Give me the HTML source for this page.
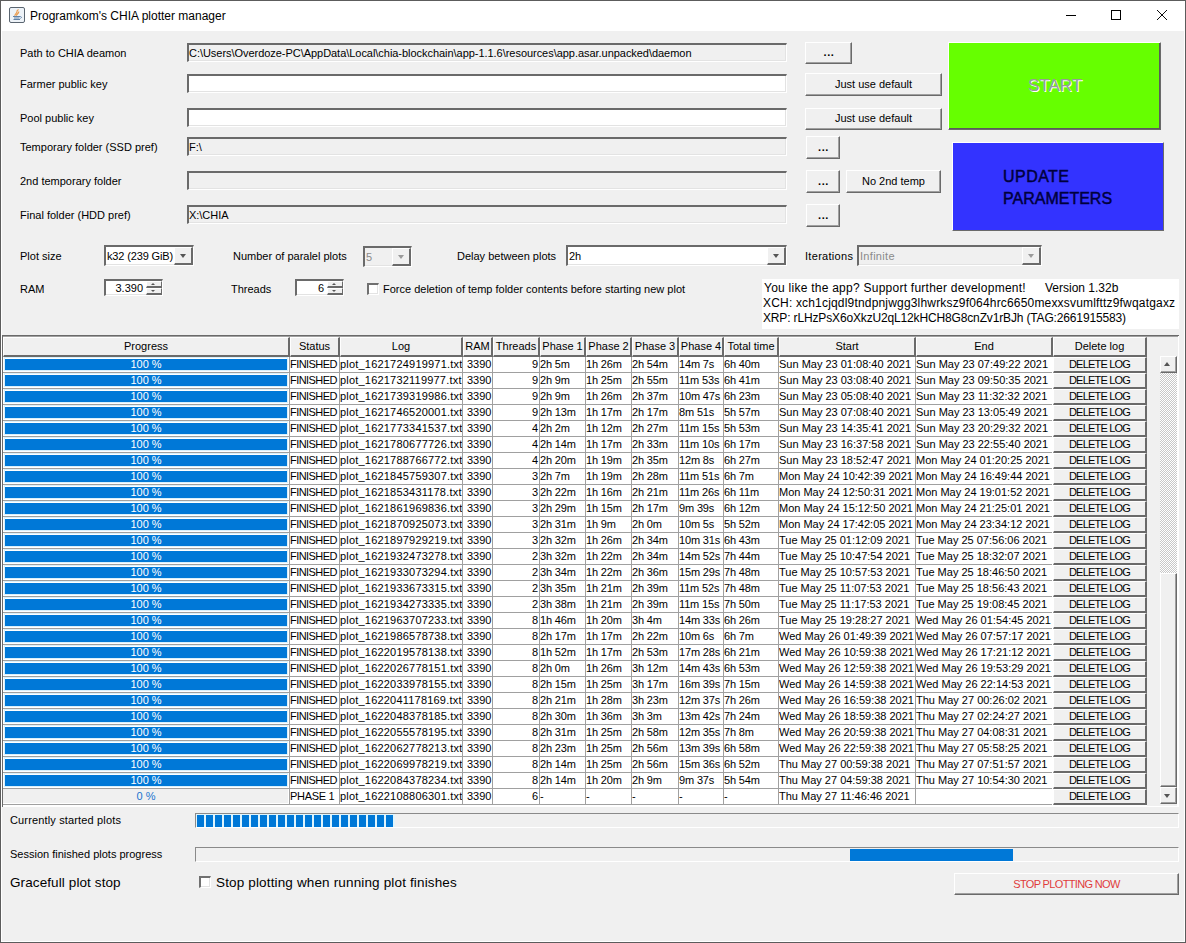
<!DOCTYPE html><html><head><meta charset="utf-8"><style>
*{margin:0;padding:0;box-sizing:border-box}
html,body{width:1186px;height:943px;overflow:hidden;background:#f0f0f0}
body{position:relative;font-family:"Liberation Sans",sans-serif;font-size:11px;color:#000}
.a{position:absolute}
.t{position:absolute;white-space:nowrap;line-height:12px}
.tf{position:absolute;border-top:2px solid #6a6a6a;border-left:2px solid #6a6a6a;border-right:1px solid #fff;border-bottom:1px solid #fff;box-shadow:inset -1px -1px 0 #e3e3e3;background:#f0f0f0}
.tf.w{background:#fff}
.btn{position:absolute;background:#f0f0f0;border-top:1px solid #fff;border-left:1px solid #fff;border-right:1px solid #6a6a6a;border-bottom:1px solid #6a6a6a;box-shadow:inset -1px -1px 0 #a0a0a0;text-align:center;white-space:nowrap}
.hd{position:absolute;top:337px;height:20px;background:#f0f0f0;border-top:1px solid #fff;border-left:1px solid #fff;border-right:2px solid #6a6a6a;border-bottom:2px solid #6a6a6a;text-align:center;line-height:17px;white-space:nowrap;overflow:hidden}
.c{position:absolute;height:16px;line-height:15px;white-space:nowrap;overflow:hidden;padding-left:0}
.ab{position:absolute;background:#f0f0f0;border-top:1px solid #fff;border-left:1px solid #fff;border-right:2px solid #6a6a6a;border-bottom:2px solid #6a6a6a}
.tri{position:absolute;width:0;height:0;border-left:3.5px solid transparent;border-right:3.5px solid transparent}
.cb{position:absolute;width:12px;height:12px;background:#fff;border-top:2px solid #707070;border-left:2px solid #707070;border-right:1px solid #fff;border-bottom:1px solid #fff;box-shadow:inset -1px -1px 0 #e3e3e3}
</style></head><body>
<div class="a" style="left:0;top:0;width:1186px;height:31px;background:#fff"></div>
<div class="a" style="left:1184px;top:0;width:2px;height:943px;background:#fff"></div>
<div class="a" style="left:1px;top:0;width:1px;height:943px;background:#fff"></div>
<div class="a" style="left:0;top:941px;width:1186px;height:1px;background:#fff"></div>
<div class="a" style="left:0;top:0;width:1186px;height:1px;background:#5c5c5c"></div>
<div class="a" style="left:0;top:0;width:1px;height:943px;background:#5c5c5c"></div>
<div class="a" style="left:1185px;top:0;width:1px;height:943px;background:#5c5c5c"></div>
<div class="a" style="left:0;top:942px;width:1186px;height:1px;background:#5c5c5c"></div>
<svg class="a" style="left:9px;top:7px" width="16" height="16" viewBox="0 0 16 16">
<rect x="0.5" y="0.5" width="15" height="15" rx="1.5" fill="#eef3f8" stroke="#5a6570"/>
<path d="M6 9 C5 7.5 8.5 6 8 4.5 C7.8 3.5 9 3 9.5 2.5 M7.5 8.8 C7 7.5 10 6.5 9.8 4.5" stroke="#eb9a4a" stroke-width="1.2" fill="none"/>
<path d="M4 9.5 H11.5 M5 11 H10.5 M4.5 12.5 H11" stroke="#6283a8" stroke-width="1" fill="none"/>
<path d="M11.5 9.5 Q13.5 10 11.5 11.5" stroke="#6283a8" stroke-width="1" fill="none"/>
</svg>
<div class="t" style="left:30px;top:9px;font-size:12px;line-height:14px;color:#000">Programkom's CHIA plotter manager</div>
<div class="a" style="left:1066px;top:15px;width:10px;height:1px;background:#000"></div>
<div class="a" style="left:1111px;top:10px;width:10px;height:10px;border:1px solid #000"></div>
<svg class="a" style="left:1156px;top:9px" width="12" height="12" viewBox="0 0 12 12"><path d="M1 1 L11 11 M11 1 L1 11" stroke="#000" stroke-width="0.95"/></svg>
<div class="t" style="left:20px;top:47px">Path to CHIA deamon</div>
<div class="t" style="left:20px;top:78px">Farmer public key</div>
<div class="t" style="left:20px;top:112px">Pool public key</div>
<div class="t" style="left:20px;top:141px">Temporary folder (SSD pref)</div>
<div class="t" style="left:20px;top:175px">2nd temporary folder</div>
<div class="t" style="left:20px;top:209px">Final folder (HDD pref)</div>
<div class="tf" style="left:187px;top:43px;width:600px;height:19px"><div class="t" style="left:0px;top:2px;letter-spacing:-0.04px">C:\Users\Overdoze-PC\AppData\Local\chia-blockchain\app-1.1.6\resources\app.asar.unpacked\daemon</div></div>
<div class="tf w" style="left:187px;top:74px;width:600px;height:19px"><div class="t" style="left:0px;top:2px;letter-spacing:-0.04px"></div></div>
<div class="tf w" style="left:187px;top:108px;width:600px;height:19px"><div class="t" style="left:0px;top:2px;letter-spacing:-0.04px"></div></div>
<div class="tf" style="left:187px;top:137px;width:600px;height:19px"><div class="t" style="left:0px;top:2px;letter-spacing:-0.04px">F:\</div></div>
<div class="tf" style="left:187px;top:171px;width:600px;height:19px"><div class="t" style="left:0px;top:2px;letter-spacing:-0.04px"></div></div>
<div class="tf" style="left:187px;top:205px;width:600px;height:19px"><div class="t" style="left:0px;top:2px;letter-spacing:-0.04px">X:\CHIA</div></div>
<div class="btn" style="left:805px;top:42px;width:47px;height:22px;line-height:19px;"><span style="font-weight:bold;letter-spacing:0.6px;padding-left:1px">...</span></div>
<div class="btn" style="left:805px;top:73px;width:137px;height:23px;line-height:20px;">Just use default</div>
<div class="btn" style="left:805px;top:108px;width:137px;height:22px;line-height:19px;">Just use default</div>
<div class="btn" style="left:806px;top:136px;width:34px;height:23px;line-height:20px;"><span style="font-weight:bold;letter-spacing:0.6px;padding-left:1px">...</span></div>
<div class="btn" style="left:806px;top:170px;width:34px;height:23px;line-height:20px;"><span style="font-weight:bold;letter-spacing:0.6px;padding-left:1px">...</span></div>
<div class="btn" style="left:846px;top:170px;width:95px;height:23px;line-height:20px;">No 2nd temp</div>
<div class="btn" style="left:806px;top:204px;width:34px;height:23px;line-height:20px;"><span style="font-weight:bold;letter-spacing:0.6px;padding-left:1px">...</span></div>
<div class="btn" style="left:948px;top:42px;width:213px;height:88px;background:#66ff00;box-shadow:inset -1px -1px 0 #5a5a5a"></div>
<div class="t" style="left:1029px;top:77px;font-size:17px;line-height:19px;color:#fff">START</div>
<div class="t" style="left:1028px;top:76px;font-size:17px;line-height:19px;color:#9a9a9a">START</div>
<div class="btn" style="left:952px;top:142px;width:212px;height:89px;background:#3333ff;box-shadow:none"></div>
<div class="t" style="left:1003px;top:166px;font-size:16px;line-height:22px;color:#00003c;-webkit-text-stroke:0.45px #00003c"><span style="letter-spacing:0.45px">UPDATE</span><br>PARAMETERS</div>
<div class="t" style="left:20px;top:250px">Plot size</div>
<div class="tf" style="left:104px;top:245px;width:90px;height:21px;background:#fff"></div>
<div class="t" style="left:107px;top:250px;color:#000;letter-spacing:-0.15px">k32 (239 GiB)</div>
<div class="ab" style="left:174px;top:247px;width:19px;height:18px"></div>
<div class="tri" style="left:180px;top:254px;border-top:4px solid #555"></div>
<div class="t" style="left:233px;top:250px">Number of paralel plots</div>
<div class="tf" style="left:363px;top:246px;width:49px;height:21px;background:#f0f0f0"></div>
<div class="t" style="left:366px;top:251px;color:#8a8a8a;letter-spacing:0px">5</div>
<div class="ab" style="left:392px;top:248px;width:19px;height:18px"></div>
<div class="tri" style="left:398px;top:255px;border-top:4px solid #9a9a9a"></div>
<div class="t" style="left:457px;top:250px">Delay between plots</div>
<div class="tf" style="left:566px;top:245px;width:221px;height:21px;background:#fff"></div>
<div class="t" style="left:569px;top:250px;color:#000;letter-spacing:0px">2h</div>
<div class="ab" style="left:767px;top:247px;width:19px;height:18px"></div>
<div class="tri" style="left:773px;top:254px;border-top:4px solid #555"></div>
<div class="t" style="left:805px;top:250px;letter-spacing:0.3px">Iterations</div>
<div class="tf" style="left:857px;top:245px;width:185px;height:21px;background:#f0f0f0"></div>
<div class="t" style="left:860px;top:250px;color:#8a8a8a;letter-spacing:0.3px">Infinite</div>
<div class="ab" style="left:1022px;top:247px;width:19px;height:18px"></div>
<div class="tri" style="left:1028px;top:254px;border-top:4px solid #9a9a9a"></div>
<div class="t" style="left:20px;top:283px">RAM</div>
<div class="tf w" style="left:104px;top:279px;width:59px;height:17px"></div>
<div class="t" style="left:104px;width:39px;text-align:right;top:282px">3.390</div>
<div class="ab" style="left:146px;top:281px;width:16px;height:7px;border-right-width:1px;border-bottom-width:2px"></div>
<div class="ab" style="left:146px;top:288px;width:16px;height:7px;border-right-width:1px;border-bottom-width:2px"></div>
<div class="tri" style="left:151px;top:283px;border-left-width:2.5px;border-right-width:2.5px;border-bottom:2px solid #555"></div>
<div class="tri" style="left:151px;top:290px;border-left-width:2.5px;border-right-width:2.5px;border-top:2px solid #555"></div>
<div class="t" style="left:231px;top:283px">Threads</div>
<div class="tf w" style="left:295px;top:279px;width:49px;height:17px"></div>
<div class="t" style="left:295px;width:29px;text-align:right;top:282px">6</div>
<div class="ab" style="left:327px;top:281px;width:16px;height:7px;border-right-width:1px;border-bottom-width:2px"></div>
<div class="ab" style="left:327px;top:288px;width:16px;height:7px;border-right-width:1px;border-bottom-width:2px"></div>
<div class="tri" style="left:332px;top:283px;border-left-width:2.5px;border-right-width:2.5px;border-bottom:2px solid #555"></div>
<div class="tri" style="left:332px;top:290px;border-left-width:2.5px;border-right-width:2.5px;border-top:2px solid #555"></div>
<div class="cb" style="left:367px;top:283px"></div>
<div class="t" style="left:383px;top:283px">Force deletion of temp folder contents before starting new plot</div>
<div class="a" style="left:762px;top:279px;width:417px;height:50px;background:#fff"></div>
<div class="t" style="left:764px;top:281px;font-size:12px;line-height:14px;letter-spacing:0.25px">You like the app? Support further development!</div>
<div class="t" style="left:1045px;top:281px;font-size:12px;line-height:14px">Version 1.32b</div>
<div class="t" style="left:763px;top:296px;font-size:12px;line-height:14px;letter-spacing:0.18px">XCH: xch1cjqdl9tndpnjwgg3lhwrksz9f064hrc6650mexxsvumlfttz9fwqatgaxz</div>
<div class="t" style="left:763px;top:311px;font-size:12px;line-height:14px;letter-spacing:-0.15px">XRP: rLHzPsX6oXkzU2qL12kHCH8G8cnZv1rBJh (TAG:2661915583)</div>
<div class="a" style="left:2px;top:335px;width:1177px;height:472px;background:#fff;border-top:1px solid #6a6a6a;border-left:1px solid #6a6a6a"></div>
<div class="a" style="left:3px;top:336px;width:1175px;height:1px;background:#a0a0a0"></div>
<div class="a" style="left:3px;top:337px;width:1175px;height:20px;background:#f0f0f0"></div>
<div class="a" style="left:1147px;top:357px;width:13px;height:449px;background:#f0f0f0"></div>
<div class="a" style="left:1160px;top:337px;width:18px;height:20px;background:#f0f0f0"></div>
<div class="hd" style="left:3px;width:287px">Progress</div>
<div class="hd" style="left:290px;width:50px">Status</div>
<div class="hd" style="left:340px;width:123px">Log</div>
<div class="hd" style="left:463px;width:30px">RAM</div>
<div class="hd" style="left:493px;width:47px">Threads</div>
<div class="hd" style="left:540px;width:46px">Phase 1</div>
<div class="hd" style="left:586px;width:46px">Phase 2</div>
<div class="hd" style="left:632px;width:47px">Phase 3</div>
<div class="hd" style="left:679px;width:45px">Phase 4</div>
<div class="hd" style="left:724px;width:55px">Total time</div>
<div class="hd" style="left:779px;width:137px">Start</div>
<div class="hd" style="left:916px;width:137px">End</div>
<div class="hd" style="left:1053px;width:94px">Delete log</div>
<div class="a" style="left:3px;top:372px;width:1049px;height:1px;background:#a0a0a0"></div>
<div class="a" style="left:3px;top:388px;width:1049px;height:1px;background:#a0a0a0"></div>
<div class="a" style="left:3px;top:404px;width:1049px;height:1px;background:#a0a0a0"></div>
<div class="a" style="left:3px;top:420px;width:1049px;height:1px;background:#a0a0a0"></div>
<div class="a" style="left:3px;top:436px;width:1049px;height:1px;background:#a0a0a0"></div>
<div class="a" style="left:3px;top:452px;width:1049px;height:1px;background:#a0a0a0"></div>
<div class="a" style="left:3px;top:468px;width:1049px;height:1px;background:#a0a0a0"></div>
<div class="a" style="left:3px;top:484px;width:1049px;height:1px;background:#a0a0a0"></div>
<div class="a" style="left:3px;top:500px;width:1049px;height:1px;background:#a0a0a0"></div>
<div class="a" style="left:3px;top:516px;width:1049px;height:1px;background:#a0a0a0"></div>
<div class="a" style="left:3px;top:532px;width:1049px;height:1px;background:#a0a0a0"></div>
<div class="a" style="left:3px;top:548px;width:1049px;height:1px;background:#a0a0a0"></div>
<div class="a" style="left:3px;top:564px;width:1049px;height:1px;background:#a0a0a0"></div>
<div class="a" style="left:3px;top:580px;width:1049px;height:1px;background:#a0a0a0"></div>
<div class="a" style="left:3px;top:596px;width:1049px;height:1px;background:#a0a0a0"></div>
<div class="a" style="left:3px;top:612px;width:1049px;height:1px;background:#a0a0a0"></div>
<div class="a" style="left:3px;top:628px;width:1049px;height:1px;background:#a0a0a0"></div>
<div class="a" style="left:3px;top:644px;width:1049px;height:1px;background:#a0a0a0"></div>
<div class="a" style="left:3px;top:660px;width:1049px;height:1px;background:#a0a0a0"></div>
<div class="a" style="left:3px;top:676px;width:1049px;height:1px;background:#a0a0a0"></div>
<div class="a" style="left:3px;top:692px;width:1049px;height:1px;background:#a0a0a0"></div>
<div class="a" style="left:3px;top:708px;width:1049px;height:1px;background:#a0a0a0"></div>
<div class="a" style="left:3px;top:724px;width:1049px;height:1px;background:#a0a0a0"></div>
<div class="a" style="left:3px;top:740px;width:1049px;height:1px;background:#a0a0a0"></div>
<div class="a" style="left:3px;top:756px;width:1049px;height:1px;background:#a0a0a0"></div>
<div class="a" style="left:3px;top:772px;width:1049px;height:1px;background:#a0a0a0"></div>
<div class="a" style="left:3px;top:788px;width:1049px;height:1px;background:#a0a0a0"></div>
<div class="a" style="left:3px;top:804px;width:1049px;height:1px;background:#a0a0a0"></div>
<div class="a" style="left:289px;top:357px;width:1px;height:448px;background:#a0a0a0"></div>
<div class="a" style="left:339px;top:357px;width:1px;height:448px;background:#a0a0a0"></div>
<div class="a" style="left:462px;top:357px;width:1px;height:448px;background:#a0a0a0"></div>
<div class="a" style="left:492px;top:357px;width:1px;height:448px;background:#a0a0a0"></div>
<div class="a" style="left:539px;top:357px;width:1px;height:448px;background:#a0a0a0"></div>
<div class="a" style="left:585px;top:357px;width:1px;height:448px;background:#a0a0a0"></div>
<div class="a" style="left:631px;top:357px;width:1px;height:448px;background:#a0a0a0"></div>
<div class="a" style="left:678px;top:357px;width:1px;height:448px;background:#a0a0a0"></div>
<div class="a" style="left:723px;top:357px;width:1px;height:448px;background:#a0a0a0"></div>
<div class="a" style="left:778px;top:357px;width:1px;height:448px;background:#a0a0a0"></div>
<div class="a" style="left:915px;top:357px;width:1px;height:448px;background:#a0a0a0"></div>
<div class="a" style="left:4px;top:357px;width:284px;height:14px;background:#fff;border:1px solid #d8f0fb"></div>
<div class="a" style="left:5px;top:359px;width:282px;height:11px;background:#0078d7"></div>
<div class="t" style="left:5px;width:282px;text-align:center;top:358px;color:#fff">100 %</div>
<div class="c" style="left:290px;top:356px;width:49px;letter-spacing:-0.55px;line-height:16px">FINISHED</div>
<div class="c" style="left:340px;top:356px;width:122px;letter-spacing:0.2px;line-height:16px">plot_1621724919971.txt</div>
<div class="c" style="left:463px;top:356px;width:29px;padding-left:4px;line-height:16px">3390</div>
<div class="c" style="left:493px;top:356px;width:46px;text-align:right;padding-right:1px;padding-left:0;line-height:16px">9</div>
<div class="c" style="left:540px;top:356px;width:45px;letter-spacing:-0.15px;line-height:16px">2h 5m</div>
<div class="c" style="left:586px;top:356px;width:45px;letter-spacing:-0.15px;line-height:16px">1h 26m</div>
<div class="c" style="left:632px;top:356px;width:46px;letter-spacing:-0.15px;line-height:16px">2h 54m</div>
<div class="c" style="left:679px;top:356px;width:44px;letter-spacing:-0.15px;line-height:16px">14m 7s</div>
<div class="c" style="left:724px;top:356px;width:54px;letter-spacing:-0.15px;line-height:16px">6h 40m</div>
<div class="c" style="left:779px;top:356px;width:136px;line-height:16px">Sun May 23 01:08:40 2021</div>
<div class="c" style="left:916px;top:356px;width:136px;line-height:16px">Sun May 23 07:49:22 2021</div>
<div class="btn" style="left:1053px;top:357px;width:94px;height:16px;line-height:13px;border-bottom:2px solid #6a6a6a;border-right:2px solid #6a6a6a;box-shadow:none;letter-spacing:-0.8px">DELETE LOG</div>
<div class="a" style="left:4px;top:373px;width:284px;height:14px;background:#fff;border:1px solid #d8f0fb"></div>
<div class="a" style="left:5px;top:375px;width:282px;height:11px;background:#0078d7"></div>
<div class="t" style="left:5px;width:282px;text-align:center;top:374px;color:#fff">100 %</div>
<div class="c" style="left:290px;top:372px;width:49px;letter-spacing:-0.55px;line-height:16px">FINISHED</div>
<div class="c" style="left:340px;top:372px;width:122px;letter-spacing:0.2px;line-height:16px">plot_1621732119977.txt</div>
<div class="c" style="left:463px;top:372px;width:29px;padding-left:4px;line-height:16px">3390</div>
<div class="c" style="left:493px;top:372px;width:46px;text-align:right;padding-right:1px;padding-left:0;line-height:16px">9</div>
<div class="c" style="left:540px;top:372px;width:45px;letter-spacing:-0.15px;line-height:16px">2h 9m</div>
<div class="c" style="left:586px;top:372px;width:45px;letter-spacing:-0.15px;line-height:16px">1h 25m</div>
<div class="c" style="left:632px;top:372px;width:46px;letter-spacing:-0.15px;line-height:16px">2h 55m</div>
<div class="c" style="left:679px;top:372px;width:44px;letter-spacing:-0.15px;line-height:16px">11m 53s</div>
<div class="c" style="left:724px;top:372px;width:54px;letter-spacing:-0.15px;line-height:16px">6h 41m</div>
<div class="c" style="left:779px;top:372px;width:136px;line-height:16px">Sun May 23 03:08:40 2021</div>
<div class="c" style="left:916px;top:372px;width:136px;line-height:16px">Sun May 23 09:50:35 2021</div>
<div class="btn" style="left:1053px;top:373px;width:94px;height:16px;line-height:13px;border-bottom:2px solid #6a6a6a;border-right:2px solid #6a6a6a;box-shadow:none;letter-spacing:-0.8px">DELETE LOG</div>
<div class="a" style="left:4px;top:389px;width:284px;height:14px;background:#fff;border:1px solid #d8f0fb"></div>
<div class="a" style="left:5px;top:391px;width:282px;height:11px;background:#0078d7"></div>
<div class="t" style="left:5px;width:282px;text-align:center;top:390px;color:#fff">100 %</div>
<div class="c" style="left:290px;top:388px;width:49px;letter-spacing:-0.55px;line-height:16px">FINISHED</div>
<div class="c" style="left:340px;top:388px;width:122px;letter-spacing:0.2px;line-height:16px">plot_1621739319986.txt</div>
<div class="c" style="left:463px;top:388px;width:29px;padding-left:4px;line-height:16px">3390</div>
<div class="c" style="left:493px;top:388px;width:46px;text-align:right;padding-right:1px;padding-left:0;line-height:16px">9</div>
<div class="c" style="left:540px;top:388px;width:45px;letter-spacing:-0.15px;line-height:16px">2h 9m</div>
<div class="c" style="left:586px;top:388px;width:45px;letter-spacing:-0.15px;line-height:16px">1h 26m</div>
<div class="c" style="left:632px;top:388px;width:46px;letter-spacing:-0.15px;line-height:16px">2h 37m</div>
<div class="c" style="left:679px;top:388px;width:44px;letter-spacing:-0.15px;line-height:16px">10m 47s</div>
<div class="c" style="left:724px;top:388px;width:54px;letter-spacing:-0.15px;line-height:16px">6h 23m</div>
<div class="c" style="left:779px;top:388px;width:136px;line-height:16px">Sun May 23 05:08:40 2021</div>
<div class="c" style="left:916px;top:388px;width:136px;line-height:16px">Sun May 23 11:32:32 2021</div>
<div class="btn" style="left:1053px;top:389px;width:94px;height:16px;line-height:13px;border-bottom:2px solid #6a6a6a;border-right:2px solid #6a6a6a;box-shadow:none;letter-spacing:-0.8px">DELETE LOG</div>
<div class="a" style="left:4px;top:405px;width:284px;height:14px;background:#fff;border:1px solid #d8f0fb"></div>
<div class="a" style="left:5px;top:407px;width:282px;height:11px;background:#0078d7"></div>
<div class="t" style="left:5px;width:282px;text-align:center;top:406px;color:#fff">100 %</div>
<div class="c" style="left:290px;top:404px;width:49px;letter-spacing:-0.55px;line-height:16px">FINISHED</div>
<div class="c" style="left:340px;top:404px;width:122px;letter-spacing:0.2px;line-height:16px">plot_1621746520001.txt</div>
<div class="c" style="left:463px;top:404px;width:29px;padding-left:4px;line-height:16px">3390</div>
<div class="c" style="left:493px;top:404px;width:46px;text-align:right;padding-right:1px;padding-left:0;line-height:16px">9</div>
<div class="c" style="left:540px;top:404px;width:45px;letter-spacing:-0.15px;line-height:16px">2h 13m</div>
<div class="c" style="left:586px;top:404px;width:45px;letter-spacing:-0.15px;line-height:16px">1h 17m</div>
<div class="c" style="left:632px;top:404px;width:46px;letter-spacing:-0.15px;line-height:16px">2h 17m</div>
<div class="c" style="left:679px;top:404px;width:44px;letter-spacing:-0.15px;line-height:16px">8m 51s</div>
<div class="c" style="left:724px;top:404px;width:54px;letter-spacing:-0.15px;line-height:16px">5h 57m</div>
<div class="c" style="left:779px;top:404px;width:136px;line-height:16px">Sun May 23 07:08:40 2021</div>
<div class="c" style="left:916px;top:404px;width:136px;line-height:16px">Sun May 23 13:05:49 2021</div>
<div class="btn" style="left:1053px;top:405px;width:94px;height:16px;line-height:13px;border-bottom:2px solid #6a6a6a;border-right:2px solid #6a6a6a;box-shadow:none;letter-spacing:-0.8px">DELETE LOG</div>
<div class="a" style="left:4px;top:421px;width:284px;height:14px;background:#fff;border:1px solid #d8f0fb"></div>
<div class="a" style="left:5px;top:423px;width:282px;height:11px;background:#0078d7"></div>
<div class="t" style="left:5px;width:282px;text-align:center;top:422px;color:#fff">100 %</div>
<div class="c" style="left:290px;top:420px;width:49px;letter-spacing:-0.55px;line-height:16px">FINISHED</div>
<div class="c" style="left:340px;top:420px;width:122px;letter-spacing:0.2px;line-height:16px">plot_1621773341537.txt</div>
<div class="c" style="left:463px;top:420px;width:29px;padding-left:4px;line-height:16px">3390</div>
<div class="c" style="left:493px;top:420px;width:46px;text-align:right;padding-right:1px;padding-left:0;line-height:16px">4</div>
<div class="c" style="left:540px;top:420px;width:45px;letter-spacing:-0.15px;line-height:16px">2h 2m</div>
<div class="c" style="left:586px;top:420px;width:45px;letter-spacing:-0.15px;line-height:16px">1h 12m</div>
<div class="c" style="left:632px;top:420px;width:46px;letter-spacing:-0.15px;line-height:16px">2h 27m</div>
<div class="c" style="left:679px;top:420px;width:44px;letter-spacing:-0.15px;line-height:16px">11m 15s</div>
<div class="c" style="left:724px;top:420px;width:54px;letter-spacing:-0.15px;line-height:16px">5h 53m</div>
<div class="c" style="left:779px;top:420px;width:136px;line-height:16px">Sun May 23 14:35:41 2021</div>
<div class="c" style="left:916px;top:420px;width:136px;line-height:16px">Sun May 23 20:29:32 2021</div>
<div class="btn" style="left:1053px;top:421px;width:94px;height:16px;line-height:13px;border-bottom:2px solid #6a6a6a;border-right:2px solid #6a6a6a;box-shadow:none;letter-spacing:-0.8px">DELETE LOG</div>
<div class="a" style="left:4px;top:437px;width:284px;height:14px;background:#fff;border:1px solid #d8f0fb"></div>
<div class="a" style="left:5px;top:439px;width:282px;height:11px;background:#0078d7"></div>
<div class="t" style="left:5px;width:282px;text-align:center;top:438px;color:#fff">100 %</div>
<div class="c" style="left:290px;top:436px;width:49px;letter-spacing:-0.55px;line-height:16px">FINISHED</div>
<div class="c" style="left:340px;top:436px;width:122px;letter-spacing:0.2px;line-height:16px">plot_1621780677726.txt</div>
<div class="c" style="left:463px;top:436px;width:29px;padding-left:4px;line-height:16px">3390</div>
<div class="c" style="left:493px;top:436px;width:46px;text-align:right;padding-right:1px;padding-left:0;line-height:16px">4</div>
<div class="c" style="left:540px;top:436px;width:45px;letter-spacing:-0.15px;line-height:16px">2h 14m</div>
<div class="c" style="left:586px;top:436px;width:45px;letter-spacing:-0.15px;line-height:16px">1h 17m</div>
<div class="c" style="left:632px;top:436px;width:46px;letter-spacing:-0.15px;line-height:16px">2h 33m</div>
<div class="c" style="left:679px;top:436px;width:44px;letter-spacing:-0.15px;line-height:16px">11m 10s</div>
<div class="c" style="left:724px;top:436px;width:54px;letter-spacing:-0.15px;line-height:16px">6h 17m</div>
<div class="c" style="left:779px;top:436px;width:136px;line-height:16px">Sun May 23 16:37:58 2021</div>
<div class="c" style="left:916px;top:436px;width:136px;line-height:16px">Sun May 23 22:55:40 2021</div>
<div class="btn" style="left:1053px;top:437px;width:94px;height:16px;line-height:13px;border-bottom:2px solid #6a6a6a;border-right:2px solid #6a6a6a;box-shadow:none;letter-spacing:-0.8px">DELETE LOG</div>
<div class="a" style="left:4px;top:453px;width:284px;height:14px;background:#fff;border:1px solid #d8f0fb"></div>
<div class="a" style="left:5px;top:455px;width:282px;height:11px;background:#0078d7"></div>
<div class="t" style="left:5px;width:282px;text-align:center;top:454px;color:#fff">100 %</div>
<div class="c" style="left:290px;top:452px;width:49px;letter-spacing:-0.55px;line-height:16px">FINISHED</div>
<div class="c" style="left:340px;top:452px;width:122px;letter-spacing:0.2px;line-height:16px">plot_1621788766772.txt</div>
<div class="c" style="left:463px;top:452px;width:29px;padding-left:4px;line-height:16px">3390</div>
<div class="c" style="left:493px;top:452px;width:46px;text-align:right;padding-right:1px;padding-left:0;line-height:16px">4</div>
<div class="c" style="left:540px;top:452px;width:45px;letter-spacing:-0.15px;line-height:16px">2h 20m</div>
<div class="c" style="left:586px;top:452px;width:45px;letter-spacing:-0.15px;line-height:16px">1h 19m</div>
<div class="c" style="left:632px;top:452px;width:46px;letter-spacing:-0.15px;line-height:16px">2h 35m</div>
<div class="c" style="left:679px;top:452px;width:44px;letter-spacing:-0.15px;line-height:16px">12m 8s</div>
<div class="c" style="left:724px;top:452px;width:54px;letter-spacing:-0.15px;line-height:16px">6h 27m</div>
<div class="c" style="left:779px;top:452px;width:136px;line-height:16px">Sun May 23 18:52:47 2021</div>
<div class="c" style="left:916px;top:452px;width:136px;line-height:16px">Mon May 24 01:20:25 2021</div>
<div class="btn" style="left:1053px;top:453px;width:94px;height:16px;line-height:13px;border-bottom:2px solid #6a6a6a;border-right:2px solid #6a6a6a;box-shadow:none;letter-spacing:-0.8px">DELETE LOG</div>
<div class="a" style="left:4px;top:469px;width:284px;height:14px;background:#fff;border:1px solid #d8f0fb"></div>
<div class="a" style="left:5px;top:471px;width:282px;height:11px;background:#0078d7"></div>
<div class="t" style="left:5px;width:282px;text-align:center;top:470px;color:#fff">100 %</div>
<div class="c" style="left:290px;top:468px;width:49px;letter-spacing:-0.55px;line-height:16px">FINISHED</div>
<div class="c" style="left:340px;top:468px;width:122px;letter-spacing:0.2px;line-height:16px">plot_1621845759307.txt</div>
<div class="c" style="left:463px;top:468px;width:29px;padding-left:4px;line-height:16px">3390</div>
<div class="c" style="left:493px;top:468px;width:46px;text-align:right;padding-right:1px;padding-left:0;line-height:16px">3</div>
<div class="c" style="left:540px;top:468px;width:45px;letter-spacing:-0.15px;line-height:16px">2h 7m</div>
<div class="c" style="left:586px;top:468px;width:45px;letter-spacing:-0.15px;line-height:16px">1h 19m</div>
<div class="c" style="left:632px;top:468px;width:46px;letter-spacing:-0.15px;line-height:16px">2h 28m</div>
<div class="c" style="left:679px;top:468px;width:44px;letter-spacing:-0.15px;line-height:16px">11m 51s</div>
<div class="c" style="left:724px;top:468px;width:54px;letter-spacing:-0.15px;line-height:16px">6h 7m</div>
<div class="c" style="left:779px;top:468px;width:136px;line-height:16px">Mon May 24 10:42:39 2021</div>
<div class="c" style="left:916px;top:468px;width:136px;line-height:16px">Mon May 24 16:49:44 2021</div>
<div class="btn" style="left:1053px;top:469px;width:94px;height:16px;line-height:13px;border-bottom:2px solid #6a6a6a;border-right:2px solid #6a6a6a;box-shadow:none;letter-spacing:-0.8px">DELETE LOG</div>
<div class="a" style="left:4px;top:485px;width:284px;height:14px;background:#fff;border:1px solid #d8f0fb"></div>
<div class="a" style="left:5px;top:487px;width:282px;height:11px;background:#0078d7"></div>
<div class="t" style="left:5px;width:282px;text-align:center;top:486px;color:#fff">100 %</div>
<div class="c" style="left:290px;top:484px;width:49px;letter-spacing:-0.55px;line-height:16px">FINISHED</div>
<div class="c" style="left:340px;top:484px;width:122px;letter-spacing:0.2px;line-height:16px">plot_1621853431178.txt</div>
<div class="c" style="left:463px;top:484px;width:29px;padding-left:4px;line-height:16px">3390</div>
<div class="c" style="left:493px;top:484px;width:46px;text-align:right;padding-right:1px;padding-left:0;line-height:16px">3</div>
<div class="c" style="left:540px;top:484px;width:45px;letter-spacing:-0.15px;line-height:16px">2h 22m</div>
<div class="c" style="left:586px;top:484px;width:45px;letter-spacing:-0.15px;line-height:16px">1h 16m</div>
<div class="c" style="left:632px;top:484px;width:46px;letter-spacing:-0.15px;line-height:16px">2h 21m</div>
<div class="c" style="left:679px;top:484px;width:44px;letter-spacing:-0.15px;line-height:16px">11m 26s</div>
<div class="c" style="left:724px;top:484px;width:54px;letter-spacing:-0.15px;line-height:16px">6h 11m</div>
<div class="c" style="left:779px;top:484px;width:136px;line-height:16px">Mon May 24 12:50:31 2021</div>
<div class="c" style="left:916px;top:484px;width:136px;line-height:16px">Mon May 24 19:01:52 2021</div>
<div class="btn" style="left:1053px;top:485px;width:94px;height:16px;line-height:13px;border-bottom:2px solid #6a6a6a;border-right:2px solid #6a6a6a;box-shadow:none;letter-spacing:-0.8px">DELETE LOG</div>
<div class="a" style="left:4px;top:501px;width:284px;height:14px;background:#fff;border:1px solid #d8f0fb"></div>
<div class="a" style="left:5px;top:503px;width:282px;height:11px;background:#0078d7"></div>
<div class="t" style="left:5px;width:282px;text-align:center;top:502px;color:#fff">100 %</div>
<div class="c" style="left:290px;top:500px;width:49px;letter-spacing:-0.55px;line-height:16px">FINISHED</div>
<div class="c" style="left:340px;top:500px;width:122px;letter-spacing:0.2px;line-height:16px">plot_1621861969836.txt</div>
<div class="c" style="left:463px;top:500px;width:29px;padding-left:4px;line-height:16px">3390</div>
<div class="c" style="left:493px;top:500px;width:46px;text-align:right;padding-right:1px;padding-left:0;line-height:16px">3</div>
<div class="c" style="left:540px;top:500px;width:45px;letter-spacing:-0.15px;line-height:16px">2h 29m</div>
<div class="c" style="left:586px;top:500px;width:45px;letter-spacing:-0.15px;line-height:16px">1h 15m</div>
<div class="c" style="left:632px;top:500px;width:46px;letter-spacing:-0.15px;line-height:16px">2h 17m</div>
<div class="c" style="left:679px;top:500px;width:44px;letter-spacing:-0.15px;line-height:16px">9m 39s</div>
<div class="c" style="left:724px;top:500px;width:54px;letter-spacing:-0.15px;line-height:16px">6h 12m</div>
<div class="c" style="left:779px;top:500px;width:136px;line-height:16px">Mon May 24 15:12:50 2021</div>
<div class="c" style="left:916px;top:500px;width:136px;line-height:16px">Mon May 24 21:25:01 2021</div>
<div class="btn" style="left:1053px;top:501px;width:94px;height:16px;line-height:13px;border-bottom:2px solid #6a6a6a;border-right:2px solid #6a6a6a;box-shadow:none;letter-spacing:-0.8px">DELETE LOG</div>
<div class="a" style="left:4px;top:517px;width:284px;height:14px;background:#fff;border:1px solid #d8f0fb"></div>
<div class="a" style="left:5px;top:519px;width:282px;height:11px;background:#0078d7"></div>
<div class="t" style="left:5px;width:282px;text-align:center;top:518px;color:#fff">100 %</div>
<div class="c" style="left:290px;top:516px;width:49px;letter-spacing:-0.55px;line-height:16px">FINISHED</div>
<div class="c" style="left:340px;top:516px;width:122px;letter-spacing:0.2px;line-height:16px">plot_1621870925073.txt</div>
<div class="c" style="left:463px;top:516px;width:29px;padding-left:4px;line-height:16px">3390</div>
<div class="c" style="left:493px;top:516px;width:46px;text-align:right;padding-right:1px;padding-left:0;line-height:16px">3</div>
<div class="c" style="left:540px;top:516px;width:45px;letter-spacing:-0.15px;line-height:16px">2h 31m</div>
<div class="c" style="left:586px;top:516px;width:45px;letter-spacing:-0.15px;line-height:16px">1h 9m</div>
<div class="c" style="left:632px;top:516px;width:46px;letter-spacing:-0.15px;line-height:16px">2h 0m</div>
<div class="c" style="left:679px;top:516px;width:44px;letter-spacing:-0.15px;line-height:16px">10m 5s</div>
<div class="c" style="left:724px;top:516px;width:54px;letter-spacing:-0.15px;line-height:16px">5h 52m</div>
<div class="c" style="left:779px;top:516px;width:136px;line-height:16px">Mon May 24 17:42:05 2021</div>
<div class="c" style="left:916px;top:516px;width:136px;line-height:16px">Mon May 24 23:34:12 2021</div>
<div class="btn" style="left:1053px;top:517px;width:94px;height:16px;line-height:13px;border-bottom:2px solid #6a6a6a;border-right:2px solid #6a6a6a;box-shadow:none;letter-spacing:-0.8px">DELETE LOG</div>
<div class="a" style="left:4px;top:533px;width:284px;height:14px;background:#fff;border:1px solid #d8f0fb"></div>
<div class="a" style="left:5px;top:535px;width:282px;height:11px;background:#0078d7"></div>
<div class="t" style="left:5px;width:282px;text-align:center;top:534px;color:#fff">100 %</div>
<div class="c" style="left:290px;top:532px;width:49px;letter-spacing:-0.55px;line-height:16px">FINISHED</div>
<div class="c" style="left:340px;top:532px;width:122px;letter-spacing:0.2px;line-height:16px">plot_1621897929219.txt</div>
<div class="c" style="left:463px;top:532px;width:29px;padding-left:4px;line-height:16px">3390</div>
<div class="c" style="left:493px;top:532px;width:46px;text-align:right;padding-right:1px;padding-left:0;line-height:16px">3</div>
<div class="c" style="left:540px;top:532px;width:45px;letter-spacing:-0.15px;line-height:16px">2h 32m</div>
<div class="c" style="left:586px;top:532px;width:45px;letter-spacing:-0.15px;line-height:16px">1h 26m</div>
<div class="c" style="left:632px;top:532px;width:46px;letter-spacing:-0.15px;line-height:16px">2h 34m</div>
<div class="c" style="left:679px;top:532px;width:44px;letter-spacing:-0.15px;line-height:16px">10m 31s</div>
<div class="c" style="left:724px;top:532px;width:54px;letter-spacing:-0.15px;line-height:16px">6h 43m</div>
<div class="c" style="left:779px;top:532px;width:136px;line-height:16px">Tue May 25 01:12:09 2021</div>
<div class="c" style="left:916px;top:532px;width:136px;line-height:16px">Tue May 25 07:56:06 2021</div>
<div class="btn" style="left:1053px;top:533px;width:94px;height:16px;line-height:13px;border-bottom:2px solid #6a6a6a;border-right:2px solid #6a6a6a;box-shadow:none;letter-spacing:-0.8px">DELETE LOG</div>
<div class="a" style="left:4px;top:549px;width:284px;height:14px;background:#fff;border:1px solid #d8f0fb"></div>
<div class="a" style="left:5px;top:551px;width:282px;height:11px;background:#0078d7"></div>
<div class="t" style="left:5px;width:282px;text-align:center;top:550px;color:#fff">100 %</div>
<div class="c" style="left:290px;top:548px;width:49px;letter-spacing:-0.55px;line-height:16px">FINISHED</div>
<div class="c" style="left:340px;top:548px;width:122px;letter-spacing:0.2px;line-height:16px">plot_1621932473278.txt</div>
<div class="c" style="left:463px;top:548px;width:29px;padding-left:4px;line-height:16px">3390</div>
<div class="c" style="left:493px;top:548px;width:46px;text-align:right;padding-right:1px;padding-left:0;line-height:16px">2</div>
<div class="c" style="left:540px;top:548px;width:45px;letter-spacing:-0.15px;line-height:16px">3h 32m</div>
<div class="c" style="left:586px;top:548px;width:45px;letter-spacing:-0.15px;line-height:16px">1h 22m</div>
<div class="c" style="left:632px;top:548px;width:46px;letter-spacing:-0.15px;line-height:16px">2h 34m</div>
<div class="c" style="left:679px;top:548px;width:44px;letter-spacing:-0.15px;line-height:16px">14m 52s</div>
<div class="c" style="left:724px;top:548px;width:54px;letter-spacing:-0.15px;line-height:16px">7h 44m</div>
<div class="c" style="left:779px;top:548px;width:136px;line-height:16px">Tue May 25 10:47:54 2021</div>
<div class="c" style="left:916px;top:548px;width:136px;line-height:16px">Tue May 25 18:32:07 2021</div>
<div class="btn" style="left:1053px;top:549px;width:94px;height:16px;line-height:13px;border-bottom:2px solid #6a6a6a;border-right:2px solid #6a6a6a;box-shadow:none;letter-spacing:-0.8px">DELETE LOG</div>
<div class="a" style="left:4px;top:565px;width:284px;height:14px;background:#fff;border:1px solid #d8f0fb"></div>
<div class="a" style="left:5px;top:567px;width:282px;height:11px;background:#0078d7"></div>
<div class="t" style="left:5px;width:282px;text-align:center;top:566px;color:#fff">100 %</div>
<div class="c" style="left:290px;top:564px;width:49px;letter-spacing:-0.55px;line-height:16px">FINISHED</div>
<div class="c" style="left:340px;top:564px;width:122px;letter-spacing:0.2px;line-height:16px">plot_1621933073294.txt</div>
<div class="c" style="left:463px;top:564px;width:29px;padding-left:4px;line-height:16px">3390</div>
<div class="c" style="left:493px;top:564px;width:46px;text-align:right;padding-right:1px;padding-left:0;line-height:16px">2</div>
<div class="c" style="left:540px;top:564px;width:45px;letter-spacing:-0.15px;line-height:16px">3h 34m</div>
<div class="c" style="left:586px;top:564px;width:45px;letter-spacing:-0.15px;line-height:16px">1h 22m</div>
<div class="c" style="left:632px;top:564px;width:46px;letter-spacing:-0.15px;line-height:16px">2h 36m</div>
<div class="c" style="left:679px;top:564px;width:44px;letter-spacing:-0.15px;line-height:16px">15m 29s</div>
<div class="c" style="left:724px;top:564px;width:54px;letter-spacing:-0.15px;line-height:16px">7h 48m</div>
<div class="c" style="left:779px;top:564px;width:136px;line-height:16px">Tue May 25 10:57:53 2021</div>
<div class="c" style="left:916px;top:564px;width:136px;line-height:16px">Tue May 25 18:46:50 2021</div>
<div class="btn" style="left:1053px;top:565px;width:94px;height:16px;line-height:13px;border-bottom:2px solid #6a6a6a;border-right:2px solid #6a6a6a;box-shadow:none;letter-spacing:-0.8px">DELETE LOG</div>
<div class="a" style="left:4px;top:581px;width:284px;height:14px;background:#fff;border:1px solid #d8f0fb"></div>
<div class="a" style="left:5px;top:583px;width:282px;height:11px;background:#0078d7"></div>
<div class="t" style="left:5px;width:282px;text-align:center;top:582px;color:#fff">100 %</div>
<div class="c" style="left:290px;top:580px;width:49px;letter-spacing:-0.55px;line-height:16px">FINISHED</div>
<div class="c" style="left:340px;top:580px;width:122px;letter-spacing:0.2px;line-height:16px">plot_1621933673315.txt</div>
<div class="c" style="left:463px;top:580px;width:29px;padding-left:4px;line-height:16px">3390</div>
<div class="c" style="left:493px;top:580px;width:46px;text-align:right;padding-right:1px;padding-left:0;line-height:16px">2</div>
<div class="c" style="left:540px;top:580px;width:45px;letter-spacing:-0.15px;line-height:16px">3h 35m</div>
<div class="c" style="left:586px;top:580px;width:45px;letter-spacing:-0.15px;line-height:16px">1h 21m</div>
<div class="c" style="left:632px;top:580px;width:46px;letter-spacing:-0.15px;line-height:16px">2h 39m</div>
<div class="c" style="left:679px;top:580px;width:44px;letter-spacing:-0.15px;line-height:16px">11m 52s</div>
<div class="c" style="left:724px;top:580px;width:54px;letter-spacing:-0.15px;line-height:16px">7h 48m</div>
<div class="c" style="left:779px;top:580px;width:136px;line-height:16px">Tue May 25 11:07:53 2021</div>
<div class="c" style="left:916px;top:580px;width:136px;line-height:16px">Tue May 25 18:56:43 2021</div>
<div class="btn" style="left:1053px;top:581px;width:94px;height:16px;line-height:13px;border-bottom:2px solid #6a6a6a;border-right:2px solid #6a6a6a;box-shadow:none;letter-spacing:-0.8px">DELETE LOG</div>
<div class="a" style="left:4px;top:597px;width:284px;height:14px;background:#fff;border:1px solid #d8f0fb"></div>
<div class="a" style="left:5px;top:599px;width:282px;height:11px;background:#0078d7"></div>
<div class="t" style="left:5px;width:282px;text-align:center;top:598px;color:#fff">100 %</div>
<div class="c" style="left:290px;top:596px;width:49px;letter-spacing:-0.55px;line-height:16px">FINISHED</div>
<div class="c" style="left:340px;top:596px;width:122px;letter-spacing:0.2px;line-height:16px">plot_1621934273335.txt</div>
<div class="c" style="left:463px;top:596px;width:29px;padding-left:4px;line-height:16px">3390</div>
<div class="c" style="left:493px;top:596px;width:46px;text-align:right;padding-right:1px;padding-left:0;line-height:16px">2</div>
<div class="c" style="left:540px;top:596px;width:45px;letter-spacing:-0.15px;line-height:16px">3h 38m</div>
<div class="c" style="left:586px;top:596px;width:45px;letter-spacing:-0.15px;line-height:16px">1h 21m</div>
<div class="c" style="left:632px;top:596px;width:46px;letter-spacing:-0.15px;line-height:16px">2h 39m</div>
<div class="c" style="left:679px;top:596px;width:44px;letter-spacing:-0.15px;line-height:16px">11m 15s</div>
<div class="c" style="left:724px;top:596px;width:54px;letter-spacing:-0.15px;line-height:16px">7h 50m</div>
<div class="c" style="left:779px;top:596px;width:136px;line-height:16px">Tue May 25 11:17:53 2021</div>
<div class="c" style="left:916px;top:596px;width:136px;line-height:16px">Tue May 25 19:08:45 2021</div>
<div class="btn" style="left:1053px;top:597px;width:94px;height:16px;line-height:13px;border-bottom:2px solid #6a6a6a;border-right:2px solid #6a6a6a;box-shadow:none;letter-spacing:-0.8px">DELETE LOG</div>
<div class="a" style="left:4px;top:613px;width:284px;height:14px;background:#fff;border:1px solid #d8f0fb"></div>
<div class="a" style="left:5px;top:615px;width:282px;height:11px;background:#0078d7"></div>
<div class="t" style="left:5px;width:282px;text-align:center;top:614px;color:#fff">100 %</div>
<div class="c" style="left:290px;top:612px;width:49px;letter-spacing:-0.55px;line-height:16px">FINISHED</div>
<div class="c" style="left:340px;top:612px;width:122px;letter-spacing:0.2px;line-height:16px">plot_1621963707233.txt</div>
<div class="c" style="left:463px;top:612px;width:29px;padding-left:4px;line-height:16px">3390</div>
<div class="c" style="left:493px;top:612px;width:46px;text-align:right;padding-right:1px;padding-left:0;line-height:16px">8</div>
<div class="c" style="left:540px;top:612px;width:45px;letter-spacing:-0.15px;line-height:16px">1h 46m</div>
<div class="c" style="left:586px;top:612px;width:45px;letter-spacing:-0.15px;line-height:16px">1h 20m</div>
<div class="c" style="left:632px;top:612px;width:46px;letter-spacing:-0.15px;line-height:16px">3h 4m</div>
<div class="c" style="left:679px;top:612px;width:44px;letter-spacing:-0.15px;line-height:16px">14m 33s</div>
<div class="c" style="left:724px;top:612px;width:54px;letter-spacing:-0.15px;line-height:16px">6h 26m</div>
<div class="c" style="left:779px;top:612px;width:136px;line-height:16px">Tue May 25 19:28:27 2021</div>
<div class="c" style="left:916px;top:612px;width:136px;line-height:16px">Wed May 26 01:54:45 2021</div>
<div class="btn" style="left:1053px;top:613px;width:94px;height:16px;line-height:13px;border-bottom:2px solid #6a6a6a;border-right:2px solid #6a6a6a;box-shadow:none;letter-spacing:-0.8px">DELETE LOG</div>
<div class="a" style="left:4px;top:629px;width:284px;height:14px;background:#fff;border:1px solid #d8f0fb"></div>
<div class="a" style="left:5px;top:631px;width:282px;height:11px;background:#0078d7"></div>
<div class="t" style="left:5px;width:282px;text-align:center;top:630px;color:#fff">100 %</div>
<div class="c" style="left:290px;top:628px;width:49px;letter-spacing:-0.55px;line-height:16px">FINISHED</div>
<div class="c" style="left:340px;top:628px;width:122px;letter-spacing:0.2px;line-height:16px">plot_1621986578738.txt</div>
<div class="c" style="left:463px;top:628px;width:29px;padding-left:4px;line-height:16px">3390</div>
<div class="c" style="left:493px;top:628px;width:46px;text-align:right;padding-right:1px;padding-left:0;line-height:16px">8</div>
<div class="c" style="left:540px;top:628px;width:45px;letter-spacing:-0.15px;line-height:16px">2h 17m</div>
<div class="c" style="left:586px;top:628px;width:45px;letter-spacing:-0.15px;line-height:16px">1h 17m</div>
<div class="c" style="left:632px;top:628px;width:46px;letter-spacing:-0.15px;line-height:16px">2h 22m</div>
<div class="c" style="left:679px;top:628px;width:44px;letter-spacing:-0.15px;line-height:16px">10m 6s</div>
<div class="c" style="left:724px;top:628px;width:54px;letter-spacing:-0.15px;line-height:16px">6h 7m</div>
<div class="c" style="left:779px;top:628px;width:136px;line-height:16px">Wed May 26 01:49:39 2021</div>
<div class="c" style="left:916px;top:628px;width:136px;line-height:16px">Wed May 26 07:57:17 2021</div>
<div class="btn" style="left:1053px;top:629px;width:94px;height:16px;line-height:13px;border-bottom:2px solid #6a6a6a;border-right:2px solid #6a6a6a;box-shadow:none;letter-spacing:-0.8px">DELETE LOG</div>
<div class="a" style="left:4px;top:645px;width:284px;height:14px;background:#fff;border:1px solid #d8f0fb"></div>
<div class="a" style="left:5px;top:647px;width:282px;height:11px;background:#0078d7"></div>
<div class="t" style="left:5px;width:282px;text-align:center;top:646px;color:#fff">100 %</div>
<div class="c" style="left:290px;top:644px;width:49px;letter-spacing:-0.55px;line-height:16px">FINISHED</div>
<div class="c" style="left:340px;top:644px;width:122px;letter-spacing:0.2px;line-height:16px">plot_1622019578138.txt</div>
<div class="c" style="left:463px;top:644px;width:29px;padding-left:4px;line-height:16px">3390</div>
<div class="c" style="left:493px;top:644px;width:46px;text-align:right;padding-right:1px;padding-left:0;line-height:16px">8</div>
<div class="c" style="left:540px;top:644px;width:45px;letter-spacing:-0.15px;line-height:16px">1h 52m</div>
<div class="c" style="left:586px;top:644px;width:45px;letter-spacing:-0.15px;line-height:16px">1h 17m</div>
<div class="c" style="left:632px;top:644px;width:46px;letter-spacing:-0.15px;line-height:16px">2h 53m</div>
<div class="c" style="left:679px;top:644px;width:44px;letter-spacing:-0.15px;line-height:16px">17m 28s</div>
<div class="c" style="left:724px;top:644px;width:54px;letter-spacing:-0.15px;line-height:16px">6h 21m</div>
<div class="c" style="left:779px;top:644px;width:136px;line-height:16px">Wed May 26 10:59:38 2021</div>
<div class="c" style="left:916px;top:644px;width:136px;line-height:16px">Wed May 26 17:21:12 2021</div>
<div class="btn" style="left:1053px;top:645px;width:94px;height:16px;line-height:13px;border-bottom:2px solid #6a6a6a;border-right:2px solid #6a6a6a;box-shadow:none;letter-spacing:-0.8px">DELETE LOG</div>
<div class="a" style="left:4px;top:661px;width:284px;height:14px;background:#fff;border:1px solid #d8f0fb"></div>
<div class="a" style="left:5px;top:663px;width:282px;height:11px;background:#0078d7"></div>
<div class="t" style="left:5px;width:282px;text-align:center;top:662px;color:#fff">100 %</div>
<div class="c" style="left:290px;top:660px;width:49px;letter-spacing:-0.55px;line-height:16px">FINISHED</div>
<div class="c" style="left:340px;top:660px;width:122px;letter-spacing:0.2px;line-height:16px">plot_1622026778151.txt</div>
<div class="c" style="left:463px;top:660px;width:29px;padding-left:4px;line-height:16px">3390</div>
<div class="c" style="left:493px;top:660px;width:46px;text-align:right;padding-right:1px;padding-left:0;line-height:16px">8</div>
<div class="c" style="left:540px;top:660px;width:45px;letter-spacing:-0.15px;line-height:16px">2h 0m</div>
<div class="c" style="left:586px;top:660px;width:45px;letter-spacing:-0.15px;line-height:16px">1h 26m</div>
<div class="c" style="left:632px;top:660px;width:46px;letter-spacing:-0.15px;line-height:16px">3h 12m</div>
<div class="c" style="left:679px;top:660px;width:44px;letter-spacing:-0.15px;line-height:16px">14m 43s</div>
<div class="c" style="left:724px;top:660px;width:54px;letter-spacing:-0.15px;line-height:16px">6h 53m</div>
<div class="c" style="left:779px;top:660px;width:136px;line-height:16px">Wed May 26 12:59:38 2021</div>
<div class="c" style="left:916px;top:660px;width:136px;line-height:16px">Wed May 26 19:53:29 2021</div>
<div class="btn" style="left:1053px;top:661px;width:94px;height:16px;line-height:13px;border-bottom:2px solid #6a6a6a;border-right:2px solid #6a6a6a;box-shadow:none;letter-spacing:-0.8px">DELETE LOG</div>
<div class="a" style="left:4px;top:677px;width:284px;height:14px;background:#fff;border:1px solid #d8f0fb"></div>
<div class="a" style="left:5px;top:679px;width:282px;height:11px;background:#0078d7"></div>
<div class="t" style="left:5px;width:282px;text-align:center;top:678px;color:#fff">100 %</div>
<div class="c" style="left:290px;top:676px;width:49px;letter-spacing:-0.55px;line-height:16px">FINISHED</div>
<div class="c" style="left:340px;top:676px;width:122px;letter-spacing:0.2px;line-height:16px">plot_1622033978155.txt</div>
<div class="c" style="left:463px;top:676px;width:29px;padding-left:4px;line-height:16px">3390</div>
<div class="c" style="left:493px;top:676px;width:46px;text-align:right;padding-right:1px;padding-left:0;line-height:16px">8</div>
<div class="c" style="left:540px;top:676px;width:45px;letter-spacing:-0.15px;line-height:16px">2h 15m</div>
<div class="c" style="left:586px;top:676px;width:45px;letter-spacing:-0.15px;line-height:16px">1h 25m</div>
<div class="c" style="left:632px;top:676px;width:46px;letter-spacing:-0.15px;line-height:16px">3h 17m</div>
<div class="c" style="left:679px;top:676px;width:44px;letter-spacing:-0.15px;line-height:16px">16m 39s</div>
<div class="c" style="left:724px;top:676px;width:54px;letter-spacing:-0.15px;line-height:16px">7h 15m</div>
<div class="c" style="left:779px;top:676px;width:136px;line-height:16px">Wed May 26 14:59:38 2021</div>
<div class="c" style="left:916px;top:676px;width:136px;line-height:16px">Wed May 26 22:14:53 2021</div>
<div class="btn" style="left:1053px;top:677px;width:94px;height:16px;line-height:13px;border-bottom:2px solid #6a6a6a;border-right:2px solid #6a6a6a;box-shadow:none;letter-spacing:-0.8px">DELETE LOG</div>
<div class="a" style="left:4px;top:693px;width:284px;height:14px;background:#fff;border:1px solid #d8f0fb"></div>
<div class="a" style="left:5px;top:695px;width:282px;height:11px;background:#0078d7"></div>
<div class="t" style="left:5px;width:282px;text-align:center;top:694px;color:#fff">100 %</div>
<div class="c" style="left:290px;top:692px;width:49px;letter-spacing:-0.55px;line-height:16px">FINISHED</div>
<div class="c" style="left:340px;top:692px;width:122px;letter-spacing:0.2px;line-height:16px">plot_1622041178169.txt</div>
<div class="c" style="left:463px;top:692px;width:29px;padding-left:4px;line-height:16px">3390</div>
<div class="c" style="left:493px;top:692px;width:46px;text-align:right;padding-right:1px;padding-left:0;line-height:16px">8</div>
<div class="c" style="left:540px;top:692px;width:45px;letter-spacing:-0.15px;line-height:16px">2h 21m</div>
<div class="c" style="left:586px;top:692px;width:45px;letter-spacing:-0.15px;line-height:16px">1h 28m</div>
<div class="c" style="left:632px;top:692px;width:46px;letter-spacing:-0.15px;line-height:16px">3h 23m</div>
<div class="c" style="left:679px;top:692px;width:44px;letter-spacing:-0.15px;line-height:16px">12m 37s</div>
<div class="c" style="left:724px;top:692px;width:54px;letter-spacing:-0.15px;line-height:16px">7h 26m</div>
<div class="c" style="left:779px;top:692px;width:136px;line-height:16px">Wed May 26 16:59:38 2021</div>
<div class="c" style="left:916px;top:692px;width:136px;line-height:16px">Thu May 27 00:26:02 2021</div>
<div class="btn" style="left:1053px;top:693px;width:94px;height:16px;line-height:13px;border-bottom:2px solid #6a6a6a;border-right:2px solid #6a6a6a;box-shadow:none;letter-spacing:-0.8px">DELETE LOG</div>
<div class="a" style="left:4px;top:709px;width:284px;height:14px;background:#fff;border:1px solid #d8f0fb"></div>
<div class="a" style="left:5px;top:711px;width:282px;height:11px;background:#0078d7"></div>
<div class="t" style="left:5px;width:282px;text-align:center;top:710px;color:#fff">100 %</div>
<div class="c" style="left:290px;top:708px;width:49px;letter-spacing:-0.55px;line-height:16px">FINISHED</div>
<div class="c" style="left:340px;top:708px;width:122px;letter-spacing:0.2px;line-height:16px">plot_1622048378185.txt</div>
<div class="c" style="left:463px;top:708px;width:29px;padding-left:4px;line-height:16px">3390</div>
<div class="c" style="left:493px;top:708px;width:46px;text-align:right;padding-right:1px;padding-left:0;line-height:16px">8</div>
<div class="c" style="left:540px;top:708px;width:45px;letter-spacing:-0.15px;line-height:16px">2h 30m</div>
<div class="c" style="left:586px;top:708px;width:45px;letter-spacing:-0.15px;line-height:16px">1h 36m</div>
<div class="c" style="left:632px;top:708px;width:46px;letter-spacing:-0.15px;line-height:16px">3h 3m</div>
<div class="c" style="left:679px;top:708px;width:44px;letter-spacing:-0.15px;line-height:16px">13m 42s</div>
<div class="c" style="left:724px;top:708px;width:54px;letter-spacing:-0.15px;line-height:16px">7h 24m</div>
<div class="c" style="left:779px;top:708px;width:136px;line-height:16px">Wed May 26 18:59:38 2021</div>
<div class="c" style="left:916px;top:708px;width:136px;line-height:16px">Thu May 27 02:24:27 2021</div>
<div class="btn" style="left:1053px;top:709px;width:94px;height:16px;line-height:13px;border-bottom:2px solid #6a6a6a;border-right:2px solid #6a6a6a;box-shadow:none;letter-spacing:-0.8px">DELETE LOG</div>
<div class="a" style="left:4px;top:725px;width:284px;height:14px;background:#fff;border:1px solid #d8f0fb"></div>
<div class="a" style="left:5px;top:727px;width:282px;height:11px;background:#0078d7"></div>
<div class="t" style="left:5px;width:282px;text-align:center;top:726px;color:#fff">100 %</div>
<div class="c" style="left:290px;top:724px;width:49px;letter-spacing:-0.55px;line-height:16px">FINISHED</div>
<div class="c" style="left:340px;top:724px;width:122px;letter-spacing:0.2px;line-height:16px">plot_1622055578195.txt</div>
<div class="c" style="left:463px;top:724px;width:29px;padding-left:4px;line-height:16px">3390</div>
<div class="c" style="left:493px;top:724px;width:46px;text-align:right;padding-right:1px;padding-left:0;line-height:16px">8</div>
<div class="c" style="left:540px;top:724px;width:45px;letter-spacing:-0.15px;line-height:16px">2h 31m</div>
<div class="c" style="left:586px;top:724px;width:45px;letter-spacing:-0.15px;line-height:16px">1h 25m</div>
<div class="c" style="left:632px;top:724px;width:46px;letter-spacing:-0.15px;line-height:16px">2h 58m</div>
<div class="c" style="left:679px;top:724px;width:44px;letter-spacing:-0.15px;line-height:16px">12m 35s</div>
<div class="c" style="left:724px;top:724px;width:54px;letter-spacing:-0.15px;line-height:16px">7h 8m</div>
<div class="c" style="left:779px;top:724px;width:136px;line-height:16px">Wed May 26 20:59:38 2021</div>
<div class="c" style="left:916px;top:724px;width:136px;line-height:16px">Thu May 27 04:08:31 2021</div>
<div class="btn" style="left:1053px;top:725px;width:94px;height:16px;line-height:13px;border-bottom:2px solid #6a6a6a;border-right:2px solid #6a6a6a;box-shadow:none;letter-spacing:-0.8px">DELETE LOG</div>
<div class="a" style="left:4px;top:741px;width:284px;height:14px;background:#fff;border:1px solid #d8f0fb"></div>
<div class="a" style="left:5px;top:743px;width:282px;height:11px;background:#0078d7"></div>
<div class="t" style="left:5px;width:282px;text-align:center;top:742px;color:#fff">100 %</div>
<div class="c" style="left:290px;top:740px;width:49px;letter-spacing:-0.55px;line-height:16px">FINISHED</div>
<div class="c" style="left:340px;top:740px;width:122px;letter-spacing:0.2px;line-height:16px">plot_1622062778213.txt</div>
<div class="c" style="left:463px;top:740px;width:29px;padding-left:4px;line-height:16px">3390</div>
<div class="c" style="left:493px;top:740px;width:46px;text-align:right;padding-right:1px;padding-left:0;line-height:16px">8</div>
<div class="c" style="left:540px;top:740px;width:45px;letter-spacing:-0.15px;line-height:16px">2h 23m</div>
<div class="c" style="left:586px;top:740px;width:45px;letter-spacing:-0.15px;line-height:16px">1h 25m</div>
<div class="c" style="left:632px;top:740px;width:46px;letter-spacing:-0.15px;line-height:16px">2h 56m</div>
<div class="c" style="left:679px;top:740px;width:44px;letter-spacing:-0.15px;line-height:16px">13m 39s</div>
<div class="c" style="left:724px;top:740px;width:54px;letter-spacing:-0.15px;line-height:16px">6h 58m</div>
<div class="c" style="left:779px;top:740px;width:136px;line-height:16px">Wed May 26 22:59:38 2021</div>
<div class="c" style="left:916px;top:740px;width:136px;line-height:16px">Thu May 27 05:58:25 2021</div>
<div class="btn" style="left:1053px;top:741px;width:94px;height:16px;line-height:13px;border-bottom:2px solid #6a6a6a;border-right:2px solid #6a6a6a;box-shadow:none;letter-spacing:-0.8px">DELETE LOG</div>
<div class="a" style="left:4px;top:757px;width:284px;height:14px;background:#fff;border:1px solid #d8f0fb"></div>
<div class="a" style="left:5px;top:759px;width:282px;height:11px;background:#0078d7"></div>
<div class="t" style="left:5px;width:282px;text-align:center;top:758px;color:#fff">100 %</div>
<div class="c" style="left:290px;top:756px;width:49px;letter-spacing:-0.55px;line-height:16px">FINISHED</div>
<div class="c" style="left:340px;top:756px;width:122px;letter-spacing:0.2px;line-height:16px">plot_1622069978219.txt</div>
<div class="c" style="left:463px;top:756px;width:29px;padding-left:4px;line-height:16px">3390</div>
<div class="c" style="left:493px;top:756px;width:46px;text-align:right;padding-right:1px;padding-left:0;line-height:16px">8</div>
<div class="c" style="left:540px;top:756px;width:45px;letter-spacing:-0.15px;line-height:16px">2h 14m</div>
<div class="c" style="left:586px;top:756px;width:45px;letter-spacing:-0.15px;line-height:16px">1h 25m</div>
<div class="c" style="left:632px;top:756px;width:46px;letter-spacing:-0.15px;line-height:16px">2h 56m</div>
<div class="c" style="left:679px;top:756px;width:44px;letter-spacing:-0.15px;line-height:16px">15m 36s</div>
<div class="c" style="left:724px;top:756px;width:54px;letter-spacing:-0.15px;line-height:16px">6h 52m</div>
<div class="c" style="left:779px;top:756px;width:136px;line-height:16px">Thu May 27 00:59:38 2021</div>
<div class="c" style="left:916px;top:756px;width:136px;line-height:16px">Thu May 27 07:51:57 2021</div>
<div class="btn" style="left:1053px;top:757px;width:94px;height:16px;line-height:13px;border-bottom:2px solid #6a6a6a;border-right:2px solid #6a6a6a;box-shadow:none;letter-spacing:-0.8px">DELETE LOG</div>
<div class="a" style="left:4px;top:773px;width:284px;height:14px;background:#fff;border:1px solid #d8f0fb"></div>
<div class="a" style="left:5px;top:775px;width:282px;height:11px;background:#0078d7"></div>
<div class="t" style="left:5px;width:282px;text-align:center;top:774px;color:#fff">100 %</div>
<div class="c" style="left:290px;top:772px;width:49px;letter-spacing:-0.55px;line-height:16px">FINISHED</div>
<div class="c" style="left:340px;top:772px;width:122px;letter-spacing:0.2px;line-height:16px">plot_1622084378234.txt</div>
<div class="c" style="left:463px;top:772px;width:29px;padding-left:4px;line-height:16px">3390</div>
<div class="c" style="left:493px;top:772px;width:46px;text-align:right;padding-right:1px;padding-left:0;line-height:16px">8</div>
<div class="c" style="left:540px;top:772px;width:45px;letter-spacing:-0.15px;line-height:16px">2h 14m</div>
<div class="c" style="left:586px;top:772px;width:45px;letter-spacing:-0.15px;line-height:16px">1h 20m</div>
<div class="c" style="left:632px;top:772px;width:46px;letter-spacing:-0.15px;line-height:16px">2h 9m</div>
<div class="c" style="left:679px;top:772px;width:44px;letter-spacing:-0.15px;line-height:16px">9m 37s</div>
<div class="c" style="left:724px;top:772px;width:54px;letter-spacing:-0.15px;line-height:16px">5h 54m</div>
<div class="c" style="left:779px;top:772px;width:136px;line-height:16px">Thu May 27 04:59:38 2021</div>
<div class="c" style="left:916px;top:772px;width:136px;line-height:16px">Thu May 27 10:54:30 2021</div>
<div class="btn" style="left:1053px;top:773px;width:94px;height:16px;line-height:13px;border-bottom:2px solid #6a6a6a;border-right:2px solid #6a6a6a;box-shadow:none;letter-spacing:-0.8px">DELETE LOG</div>
<div class="a" style="left:3px;top:789px;width:285px;height:14px;background:#f0f0f0"></div>
<div class="t" style="left:5px;width:282px;text-align:center;top:790px;color:#1a74cf">0 %</div>
<div class="c" style="left:290px;top:788px;width:49px;letter-spacing:-0.3px;line-height:16px">PHASE 1</div>
<div class="c" style="left:340px;top:788px;width:122px;letter-spacing:0.2px;line-height:16px">plot_1622108806301.txt</div>
<div class="c" style="left:463px;top:788px;width:29px;padding-left:4px;line-height:16px">3390</div>
<div class="c" style="left:493px;top:788px;width:46px;text-align:right;padding-right:1px;padding-left:0;line-height:16px">6</div>
<div class="c" style="left:540px;top:788px;width:45px;letter-spacing:-0.15px;line-height:16px">-</div>
<div class="c" style="left:586px;top:788px;width:45px;letter-spacing:-0.15px;line-height:16px">-</div>
<div class="c" style="left:632px;top:788px;width:46px;letter-spacing:-0.15px;line-height:16px">-</div>
<div class="c" style="left:679px;top:788px;width:44px;letter-spacing:-0.15px;line-height:16px">-</div>
<div class="c" style="left:724px;top:788px;width:54px;letter-spacing:-0.15px;line-height:16px">-</div>
<div class="c" style="left:779px;top:788px;width:136px;line-height:16px">Thu May 27 11:46:46 2021</div>
<div class="c" style="left:916px;top:788px;width:136px;line-height:16px"></div>
<div class="btn" style="left:1053px;top:789px;width:94px;height:16px;line-height:13px;border-bottom:2px solid #6a6a6a;border-right:2px solid #6a6a6a;box-shadow:none;letter-spacing:-0.8px">DELETE LOG</div>
<div class="a" style="left:1160px;top:356px;width:17px;height:450px;background:#f0f0f0"></div>
<div class="a" style="left:1160px;top:372px;width:17px;height:201px;background-color:#f0f0f0;background-image:repeating-conic-gradient(#c8c8c8 0 25%,#fff 0 50%);background-size:2px 2px"></div>
<div class="btn" style="left:1160px;top:356px;width:17px;height:17px"></div>
<div class="tri" style="left:1164px;top:362px;border-bottom:4px solid #555"></div>
<div class="btn" style="left:1160px;top:573px;width:17px;height:214px"></div>
<div class="btn" style="left:1160px;top:787px;width:17px;height:17px"></div>
<div class="tri" style="left:1164px;top:794px;border-top:4px solid #555"></div>
<div class="t" style="left:10px;top:814px;letter-spacing:0.15px">Currently started plots</div>
<div class="a" style="left:195px;top:813px;width:984px;height:15px;border-top:1px solid #8a8a8a;border-left:1px solid #8a8a8a;border-bottom:1px solid #fff;border-right:1px solid #fff"></div>
<div class="a" style="left:196px;top:814px;width:199px;height:13px;background:#dff5fd"></div>
<div class="a" style="left:197px;top:815px;width:7px;height:12px;background:#0078d7"></div>
<div class="a" style="left:206px;top:815px;width:7px;height:12px;background:#0078d7"></div>
<div class="a" style="left:215px;top:815px;width:7px;height:12px;background:#0078d7"></div>
<div class="a" style="left:224px;top:815px;width:7px;height:12px;background:#0078d7"></div>
<div class="a" style="left:233px;top:815px;width:7px;height:12px;background:#0078d7"></div>
<div class="a" style="left:242px;top:815px;width:7px;height:12px;background:#0078d7"></div>
<div class="a" style="left:251px;top:815px;width:7px;height:12px;background:#0078d7"></div>
<div class="a" style="left:260px;top:815px;width:7px;height:12px;background:#0078d7"></div>
<div class="a" style="left:269px;top:815px;width:7px;height:12px;background:#0078d7"></div>
<div class="a" style="left:278px;top:815px;width:7px;height:12px;background:#0078d7"></div>
<div class="a" style="left:287px;top:815px;width:7px;height:12px;background:#0078d7"></div>
<div class="a" style="left:296px;top:815px;width:7px;height:12px;background:#0078d7"></div>
<div class="a" style="left:305px;top:815px;width:7px;height:12px;background:#0078d7"></div>
<div class="a" style="left:314px;top:815px;width:7px;height:12px;background:#0078d7"></div>
<div class="a" style="left:323px;top:815px;width:7px;height:12px;background:#0078d7"></div>
<div class="a" style="left:332px;top:815px;width:7px;height:12px;background:#0078d7"></div>
<div class="a" style="left:341px;top:815px;width:7px;height:12px;background:#0078d7"></div>
<div class="a" style="left:350px;top:815px;width:7px;height:12px;background:#0078d7"></div>
<div class="a" style="left:359px;top:815px;width:7px;height:12px;background:#0078d7"></div>
<div class="a" style="left:368px;top:815px;width:7px;height:12px;background:#0078d7"></div>
<div class="a" style="left:377px;top:815px;width:7px;height:12px;background:#0078d7"></div>
<div class="a" style="left:386px;top:815px;width:7px;height:12px;background:#0078d7"></div>
<div class="t" style="left:10px;top:848px">Session finished plots progress</div>
<div class="a" style="left:195px;top:847px;width:984px;height:15px;border-top:1px solid #8a8a8a;border-left:1px solid #8a8a8a;border-bottom:1px solid #fff;border-right:1px solid #fff"></div>
<div class="a" style="left:850px;top:849px;width:163px;height:12px;background:#0078d7"></div>
<div class="t" style="left:10px;top:875px;font-size:13.5px;line-height:15px;letter-spacing:0.1px">Gracefull plot stop</div>
<div class="cb" style="left:199px;top:876px"></div>
<div class="t" style="left:216px;top:875px;font-size:13.5px;line-height:15px;letter-spacing:0.15px">Stop plotting when running plot finishes</div>
<div class="btn" style="left:954px;top:873px;width:225px;height:22px;line-height:19px;"><span style="color:#e03c3c;letter-spacing:-0.65px;position:relative;top:1px">STOP PLOTTING NOW</span></div>
</body></html>
